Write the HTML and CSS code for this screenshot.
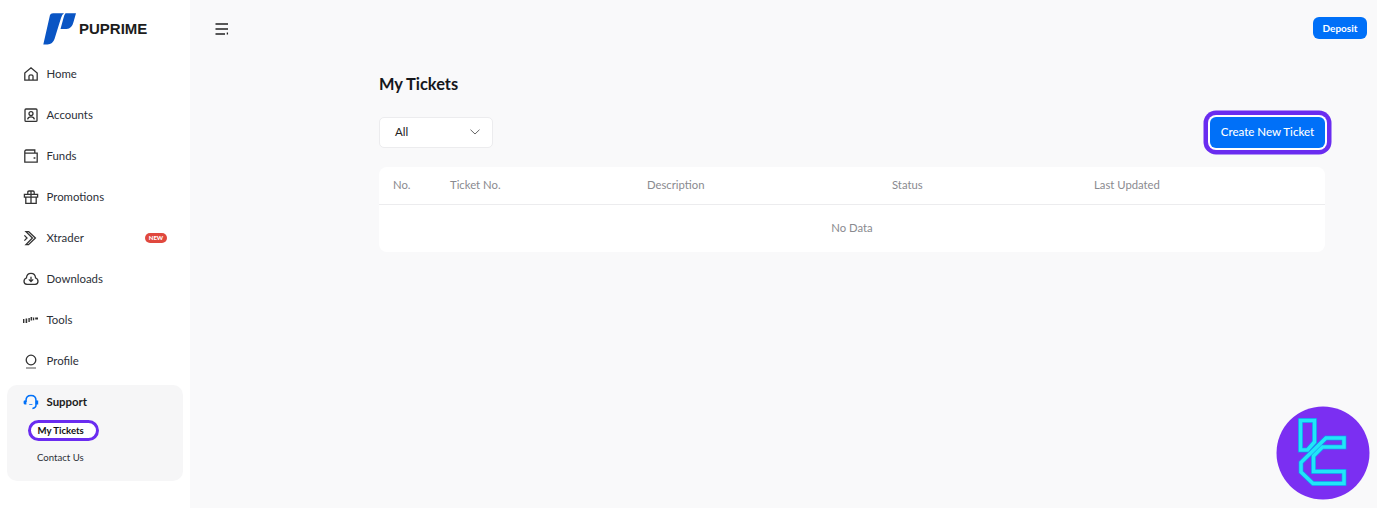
FILE: index.html
```html
<!DOCTYPE html>
<html lang="en">
<head>
    <meta charset="UTF-8">
    <meta name="viewport" content="width=device-width, initial-scale=1.0">
    <title>My Tickets</title>
    <link rel="stylesheet" href="styles.css">
</head>
<body>
    <!-- Sidebar -->
    <div class="sidebar">
        <div class="logo">
            <svg class="logo-mark" width="34" height="34" viewBox="0 0 34 34">
                <path fill="#0a55c4" d="M7 2 Q7.600 .3 10 .3 H21 Q19 1.500 18 5 L11.500 26 Q9.800 31 4.500 31.500 H.3 Z"/>
                <path fill="#0a55c4" d="M22.500 .3 H33 L30.500 9 Q29 15.500 23.500 16 H17.500 L20.500 5 Q21 2 22.500 .3 Z"/>
            </svg>
            <span class="logo-text">PUPRIME</span>
        </div>
        <a href="#" class="nav-item">
            <svg class="nav-icon" viewBox="0 0 16 16"><path d="M1.800 7 8 1.800 14.200 7V14.200H1.800ZM6 14.200V10Q6 8.800 8 8.800T10 10V14.200"/></svg>
            Home
        </a>
        <a href="#" class="nav-item">
            <svg class="nav-icon" viewBox="0 0 16 16"><rect x="2" y="2" width="12" height="12.400" rx="1"/><circle cx="8" cy="6.600" r="2"/><path d="M4.600 12.400Q5 9.800 8 9.800T11.400 12.400"/></svg>
            Accounts
        </a>
        <a href="#" class="nav-item">
            <svg class="nav-icon" viewBox="0 0 16 16"><path d="M1.800 5.200V3.400Q1.800 2 3.200 2H11.800V5.200M1.800 5.200H14.200V14.200H1.800ZM10.600 10H12.400"/></svg>
            Funds
        </a>
        <a href="#" class="nav-item">
            <svg class="nav-icon" viewBox="0 0 16 16"><path d="M1.400 5.400H14.600V8.200H1.400ZM2.800 8.200V14.400H13.200V8.200M8 5.400V14.400M8 5.400H4.800V3.200Q4.800 2 6 2H10Q11.200 2 11.200 3.200V5.400H8ZM8 2V5.400"/></svg>
            Promotions
        </a>
        <a href="#" class="nav-item">
            <svg class="nav-icon" viewBox="0 0 16 16"><path d="M5.500 1.600 12.400 8 5.500 14.600H3L9.400 8 3 1.600ZM1.400 5.400 4 8 1.400 10.600"/></svg>
            Xtrader
            <span class="new-badge">NEW</span>
        </a>
        <a href="#" class="nav-item">
            <svg class="nav-icon" viewBox="0 0 16 16"><path d="M4 13.400H12.200Q15 13 15 10.200 15 7.800 12.600 7 12.200 2.400 8 2.400 3.800 2.400 3.400 7 1 7.800 1 10.200 1 13 4 13.400ZM8 5.800V10.400M5.800 8.400 8 10.600 10.200 8.400"/></svg>
            Downloads
        </a>
        <a href="#" class="nav-item">
            <svg class="nav-icon nav-icon-fill" viewBox="0 0 16 16"><path d="M0 7h1.400v4H0ZM2.600 6.400h1.600v4.600H2.600ZM5.400 6h1.400v4H5.400ZM7.600 5h1.600v3.600H7.600ZM10 5.400h1.200v2.800H10ZM12.200 5.400h2.800v2.200h-2.800Z"/></svg>
            Tools
        </a>
        <a href="#" class="nav-item">
            <svg class="nav-icon" viewBox="0 0 16 16"><circle cx="8" cy="7" r="4.800"/><path d="M3 15H13" stroke="#777"/></svg>
            Profile
        </a>
        <div class="nav-group">
            <div class="nav-item nav-group-title">
                <svg class="nav-icon nav-icon-blue" viewBox="0 0 16 16"><path d="M3 8V6.600Q3 1.600 8 1.600T13 6.600V11Q13 14 9.400 14.400"/><path class="solid" d="M1 6.600H3.400V10.400H1.800Q.6 10.400 .6 9V7.600ZM12.600 6.600H15.200V10.400H12.600ZM6.200 10.200H9.400V11H6.200Z"/></svg>
                Support
            </div>
            <a href="#" class="sub-item sub-item-active">My Tickets</a>
            <a href="#" class="sub-item">Contact Us</a>
        </div>
    </div>

    <!-- Main Content -->
    <div class="main">
        <div class="topbar">
            <svg class="menu-icon" width="14" height="12" viewBox="0 0 14 12"><path d="M.5 1H13M.5 6H13M.5 11H10M12.400 9.400V11.400"/></svg>
            <button class="deposit-btn">Deposit</button>
        </div>
        <div class="container">
            <h1>My Tickets</h1>
            <div class="toolbar">
                <div class="select">
                    All
                    <svg width="10" height="6" viewBox="0 0 10 6"><path d="M.5 .7 5 5 9.500 .7"/></svg>
                </div>
                <button class="create-btn">Create New Ticket</button>
            </div>
            <div class="table">
                <div class="table-head">
                    <span class="col-no">No.</span>
                    <span class="col-ticket">Ticket No.</span>
                    <span class="col-desc">Description</span>
                    <span class="col-status">Status</span>
                    <span>Last Updated</span>
                </div>
                <div class="table-empty">No Data</div>
            </div>
        </div>
    </div>

    <!-- Watermark -->
    <svg class="watermark" width="94" height="94" viewBox="0 0 94 94">
        <circle cx="47" cy="47" r="46.500" fill="#7b2ff2"/>
        <g class="mark-under">
            <path d="M24.500 14.500H38.500V36L31.500 44H24.500Z"/>
            <path d="M68 32H50L25 56.500V66L37 77.500H68V65.500H37.500V50L46.500 41H68Z"/>
        </g>
        <g class="mark-over">
            <path d="M24.500 14.500H38.500V36L31.500 44H24.500Z"/>
            <path d="M68 32H50L25 56.500V66L37 77.500H68V65.500H37.500V50L46.500 41H68Z"/>
        </g>
    </svg>
</body>
</html>
```

FILE: styles.css
```css
/* Global Styles */
html, body {
    height: 100%;
}

body {
    margin: 0;
    display: flex;
    font-family: Lato, "Open Sans", sans-serif;
    background-color: #f9f9fa;
    color: #222;
    overflow: hidden;
}

a {
    color: inherit;
    text-decoration: none;
}

button {
    border: none;
    font-family: inherit;
    color: white;
    background-color: #0070f8;
}

/* Sidebar */
.sidebar {
    width: 190px;
    flex-shrink: 0;
    background-color: white;
    box-sizing: border-box;
    padding: 11px 7px 0;
}

.logo {
    height: 42px;
    display: flex;
    align-items: flex-start;
    padding-left: 36px;
    box-sizing: border-box;
}

.logo-mark {
    flex-shrink: 0;
    margin-top: 2px;
}

.logo-text {
    margin: 9px 0 0 2px;
    font-family: "Liberation Sans", Arial, sans-serif;
    font-size: 15px;
    font-weight: bold;
    color: #1c1c1c;
}

.nav-item {
    height: 41px;
    display: flex;
    align-items: center;
    padding-left: 16px;
    font-size: 11.400px;
    color: #2c3038;
}

.nav-icon {
    width: 16px;
    height: 16px;
    margin-right: 7.500px;
    fill: none;
    stroke: #333;
    stroke-width: 1.300;
    flex-shrink: 0;
}

.nav-icon-fill {
    fill: #333;
    stroke: none;
}

.nav-icon-blue {
    stroke: #0070f8;
    stroke-width: 1.500;
}

.nav-icon-blue .solid {
    fill: #0070f8;
    stroke: none;
}

.new-badge {
    margin-left: auto;
    margin-right: 16px;
    width: 22px;
    height: 10px;
    border-radius: 5px;
    background-color: #e0483e;
    color: white;
    font-size: 6px;
    font-weight: 900;
    line-height: 10px;
    text-align: center;
}

.nav-group {
    margin-top: 4px;
    height: 96px;
    background-color: #f6f6f7;
    border-radius: 10px;
}

.nav-group-title {
    height: 33px;
    font-weight: bold;
    color: #1c1c1c;
}

.sub-item {
    display: block;
    width: fit-content;
    margin-left: 30px;
    font-size: 9.600px;
    line-height: 12px;
    color: #2c3038;
}

.sub-item-active {
    margin: 2px 0 11px 21px;
    padding: 1.500px 12px 1.500px 6.500px;
    background-color: white;
    border: 3.500px solid #6a2cf0;
    border-radius: 11px;
    font-weight: bold;
    color: #111;
}

/* Main */
.main {
    flex: 1;
    min-width: 0;
    padding: 0 10px 0 25px;
}

.topbar {
    height: 56px;
    display: flex;
    align-items: flex-start;
    justify-content: space-between;
}

.menu-icon {
    margin-top: 23px;
    fill: none;
    stroke: #222;
    stroke-width: 1.300;
}

.deposit-btn {
    margin-top: 17px;
    width: 54px;
    height: 22px;
    border-radius: 6px;
    font-size: 10px;
    font-weight: bold;
}

.container {
    margin: 0 42px 0 164px;
}

h1 {
    margin: 0 0 21px;
    height: 40px;
    display: flex;
    align-items: flex-end;
    padding-bottom: 3px;
    box-sizing: border-box;
    font-size: 16.400px;
    font-weight: bold;
    color: #15171c;
}

.toolbar {
    display: flex;
    justify-content: space-between;
    align-items: center;
    height: 31px;
}

.select {
    width: 114px;
    height: 31px;
    box-sizing: border-box;
    padding: 0 12px 2px 15px;
    display: flex;
    align-items: center;
    justify-content: space-between;
    background-color: white;
    border: 1px solid #ececee;
    border-radius: 5px;
    font-size: 11.500px;
    color: #222;
}

.select svg {
    fill: none;
    stroke: #666;
    margin-top: 1px;
}

.create-btn {
    width: 115px;
    height: 31px;
    padding: 0 0 2px;
    border-radius: 6px;
    font-size: 11.500px;
    font-weight: 500;
    box-shadow: 0 0 0 2px white, 0 0 0 6.500px #6a2cf0;
}

.table {
    margin-top: 19px;
    background-color: white;
    border-radius: 8px;
    font-size: 11.300px;
    color: #8a8a8f;
    height: 85px;
}

.table-head {
    height: 35px;
    display: flex;
    align-items: center;
    padding: 0 0 2px 14px;
    border-bottom: 1px solid #ececee;
}

.col-no {
    width: 57px;
}

.col-ticket {
    width: 197px;
}

.col-desc {
    width: 245px;
}

.col-status {
    width: 202px;
}

.table-empty {
    height: 45px;
    padding-bottom: 2px;
    display: flex;
    align-items: center;
    justify-content: center;
}

/* Watermark */
.watermark {
    position: absolute;
    left: 1276px;
    top: 406px;
}

.mark-under {
    fill: none;
    stroke: #1b8cf0;
    stroke-width: 5;
}

.mark-over {
    fill: none;
    stroke: #20e6f8;
    stroke-width: 3.500;
}
```
